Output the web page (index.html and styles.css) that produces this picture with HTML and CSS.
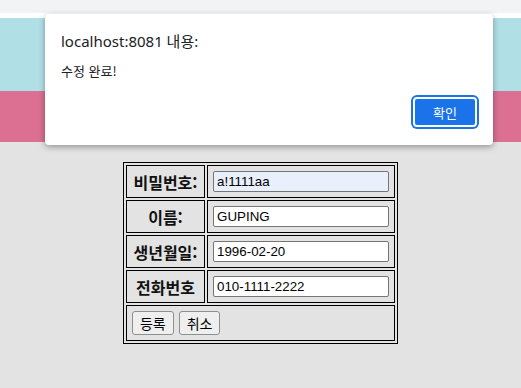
FILE: index.html
```html
<!DOCTYPE html>
<html lang="ko">
  <head>
    <meta charset="UTF-8" />
    <meta name="viewport" content="width=device-width, initial-scale=1.0" />
    <title>회원정보 수정</title>
    <link rel="stylesheet" href="styles.css">
  </head>
  <body>
    <div class="topbar"></div>
    <div class="strip"></div>
    <div class="header"></div>
    <div class="nav"></div>

    <div class="main">
      <form id="editForm">
        <table class="form-table">
          <tr>
            <th>비밀번호:</th>
            <td><input type="text" class="field autofill" value="a!1111aa" /></td>
          </tr>
          <tr>
            <th>이름:</th>
            <td><input type="text" class="field" value="GUPING" /></td>
          </tr>
          <tr>
            <th>생년월일:</th>
            <td><input type="text" class="field" value="1996-02-20" /></td>
          </tr>
          <tr>
            <th>전화번호</th>
            <td><input type="text" class="field" value="010-1111-2222" /></td>
          </tr>
          <tr>
            <td colspan="2">
              <div class="actions">
                <button type="submit" class="btn">등록</button>
                <button type="reset" class="btn">취소</button>
              </div>
            </td>
          </tr>
        </table>
      </form>
    </div>

    <div class="dialog">
      <div class="dialog-title">localhost:8081 내용:</div>
      <div class="dialog-msg">수정 완료!</div>
      <div class="dialog-actions">
        <button class="dialog-btn">확인</button>
      </div>
    </div>
  </body>
</html>
```

FILE: styles.css
```css
body {
  margin: 0;
  background-color: #e3e3e3;
  font-family: "Liberation Sans", "Noto Sans CJK KR", sans-serif;
}
.topbar {
  height: 13px;
  background-color: #f1f3f4;
}
.strip {
  height: 5px;
  background-color: #fff;
}
.header {
  height: 73px;
  background-color: #b0e0e6;
}
.nav {
  height: 51px;
  background-color: #db7093;
}
.main {
  display: flex;
  justify-content: center;
  padding-top: 20px;
}
.form-table {
  border: 1px solid black;
  border-spacing: 2px;
}
.form-table th,
.form-table td {
  border: 1px solid black;
  padding: 5px;
}
.form-table th {
  font-family: "Noto Sans CJK KR", sans-serif;
  font-size: 16px;
  line-height: 20px;
  font-weight: bold;
  color: #111;
  padding: 5px 6.5px;
}
.field {
  display: block;
  box-sizing: border-box;
  width: 176px;
  height: 21px;
  padding: 1px 3px;
  border: 1px solid #767676;
  border-radius: 2px;
  background-color: #fff;
  font-family: "Liberation Sans", sans-serif;
  font-size: 13.33px;
  color: #000;
}
.field.autofill {
  background-color: #e8f0fe;
}
.actions {
  display: flex;
  gap: 5px;
}
.btn {
  box-sizing: border-box;
  height: 24px;
  padding: 0 7px;
  border: 1px solid #8f8f8f;
  border-radius: 3px;
  background-color: #efefef;
  font-family: "Noto Sans CJK KR", sans-serif;
  font-size: 14px;
  color: #000;
}
.dialog {
  position: absolute;
  left: 45px;
  top: 14px;
  width: 448px;
  height: 131px;
  box-sizing: border-box;
  padding: 17px 16px 18px;
  display: flex;
  flex-direction: column;
  background-color: #fff;
  border-radius: 4px;
  box-shadow: 0 2px 6px rgba(0, 0, 0, 0.35);
}
.dialog-title {
  font-family: "Noto Sans", "Noto Sans CJK KR", sans-serif;
  font-size: 15px;
  line-height: 20px;
  color: #202124;
}
.dialog-msg {
  margin-top: 11px;
  font-family: "Noto Sans CJK KR", sans-serif;
  font-size: 13px;
  line-height: 18px;
  color: #202124;
}
.dialog-actions {
  margin-top: auto;
  display: flex;
  justify-content: flex-end;
}
.dialog-btn {
  box-sizing: border-box;
  width: 64px;
  height: 30px;
  border: 2px solid #fff;
  border-radius: 4px;
  box-shadow: 0 0 0 2px #1a73e8;
  background-color: #1a73e8;
  color: #fff;
  font-family: "Noto Sans CJK KR", sans-serif;
  font-size: 13px;
}
```
